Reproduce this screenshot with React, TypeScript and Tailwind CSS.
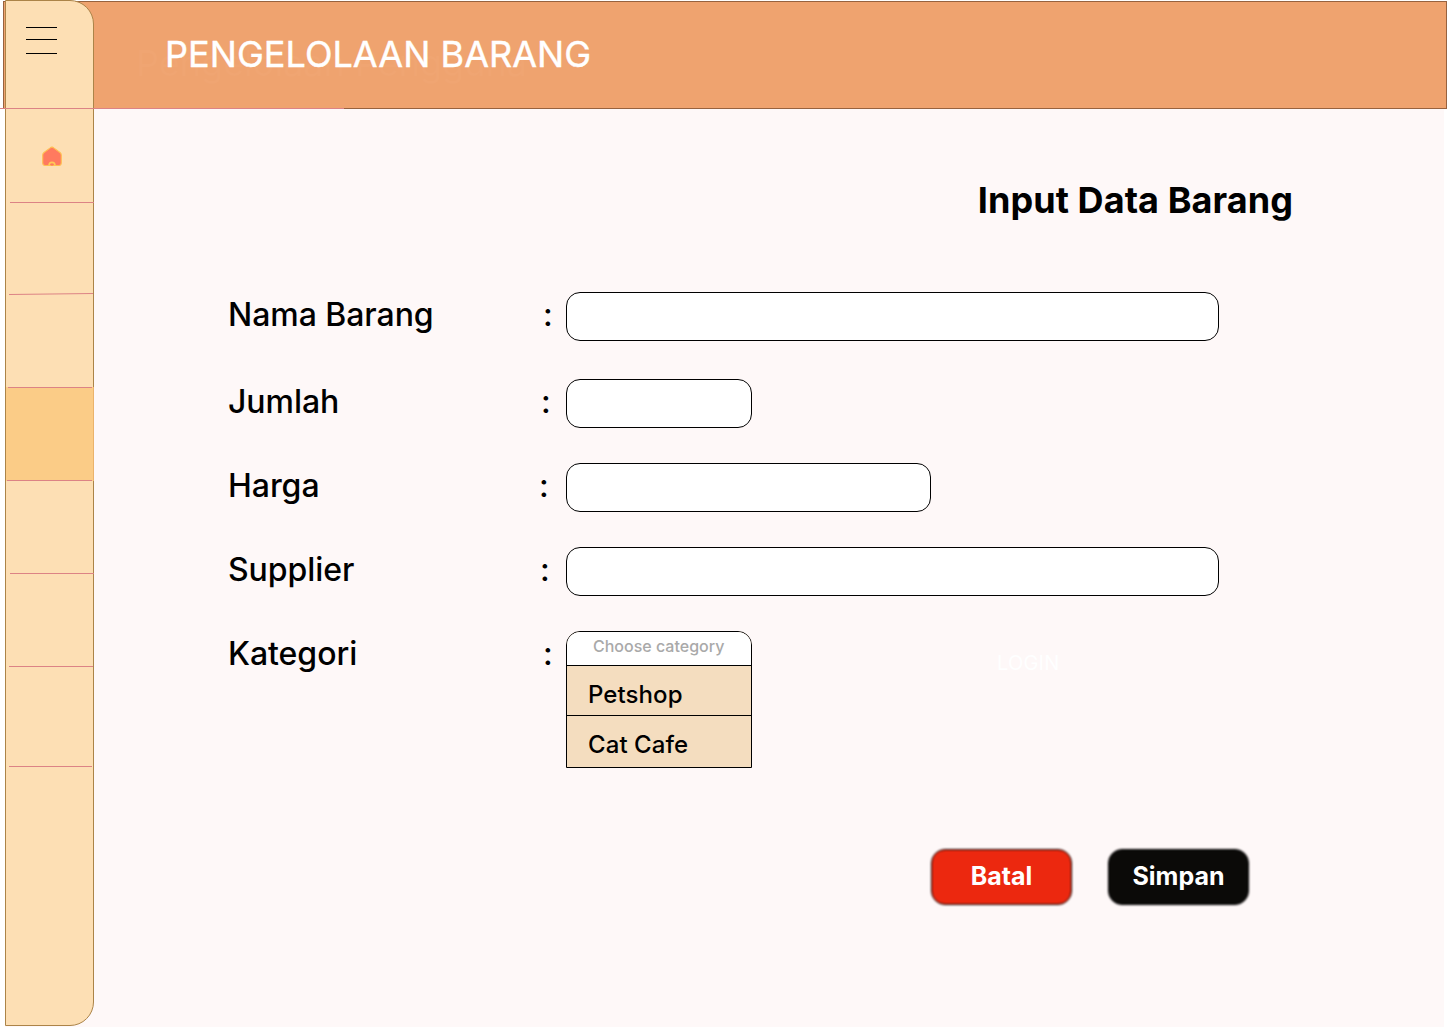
import React from "react";

type Field = { label: string; width: string; colon: string; gap: string };

const fields: Field[] = [
  { label: "Nama Barang", width: "w-[653px]", colon: "w-[23px]", gap: "mb-[38px]" },
  { label: "Jumlah", width: "w-[186px]", colon: "w-[25px]", gap: "mb-[35px]" },
  { label: "Harga", width: "w-[365px]", colon: "w-[27px]", gap: "mb-[35px]" },
  { label: "Supplier", width: "w-[653px]", colon: "w-[26px]", gap: "mb-[35px]" },
];

const label = "text-[32px] leading-[46px] font-medium whitespace-nowrap tracking-[-0.05px]";

function HomeIcon() {
  return (
    <svg className="ml-[34px] mt-[36px]" width="24" height="24" viewBox="0 0 22 22" fill="none">
      <path
        d="M9.400 2.700a2.400 2.400 0 0 1 3.200 0l5.700 4.200c.8.6 1.200 1.400 1.200 2.300v7.300c0 1.500-.9 2.300-2.300 2.300H4.800c-1.400 0-2.300-.8-2.300-2.300V9.200c0-.9.4-1.700 1.200-2.300z"
        fill="#FF7A5F"
        stroke="#FFBE50"
      />
      <path d="M8.300 18.800c0-1.800 1.200-2.900 2.700-2.900s2.700 1.100 2.700 2.900" stroke="#FFC957" strokeWidth="1.500" />
      <path d="M10 18.800c0-1.400 2-1.400 2 0" fill="#FF7A5F" />
    </svg>
  );
}

function Line({ className }: { className: string }) {
  return <div className={`h-px shrink-0 bg-[#DC8385] ${className}`} />;
}

function Sidebar() {
  return (
    <aside className="z-10 col-start-1 row-start-1 row-span-2 ml-[5px] mb-px flex flex-col rounded-r-[24px] border border-[#AC8448] bg-[#FDDFB4]">
      <div className="h-[108px] shrink-0 pl-5 pt-[26px]">
        <div className="h-px w-[31px] bg-black" />
        <div className="mt-[11px] h-px w-[31px] bg-black" />
        <div className="mt-[13px] h-px w-[31px] bg-black" />
      </div>
      <div className="h-[93px] shrink-0">
        <HomeIcon />
      </div>
      <Line className="ml-1 -mr-px" />
      <div className="h-[90px] shrink-0" />
      <svg className="ml-[3px] h-[2px] w-[84px] shrink-0" viewBox="0 0 84 2">
        <path d="M0 1.500L84 0.500" stroke="#DC8385" />
      </svg>
      <div className="h-[92px] shrink-0" />
      <div className="-mr-px flex h-[94px] shrink-0 flex-col justify-between border-r border-[#EBB36B] bg-[#FBCC87]">
        <Line className="ml-[2px] mr-px" />
        <Line className="ml-px mr-px" />
      </div>
      <div className="h-[92px] shrink-0" />
      <Line className="ml-1 -mr-px" />
      <div className="h-[92px] shrink-0" />
      <Line className="ml-[3px]" />
      <div className="h-[99px] shrink-0" />
      <Line className="ml-[3px] mr-px" />
    </aside>
  );
}

function ActionButton({ text, fill }: { text: string; fill: string }) {
  return (
    <button className="relative h-[56px] w-[141px] text-[25px] font-bold text-white">
      <span className={`absolute inset-0 rounded-[14px] border border-black blur-[1px] ${fill}`} />
      <span className="relative -mt-[2px] block leading-[54px]">{text}</span>
    </button>
  );
}

export default function App() {
  return (
    <div className="grid h-[1027px] w-[1447px] grid-cols-[94px_1fr] grid-rows-[109px_918px] overflow-hidden bg-white font-['Inter',sans-serif] text-black">
      <div className="col-span-2 col-start-1 row-start-2 ml-[5px] mr-[3px] bg-[#FEF8F8]" />
      <header className="col-span-2 col-start-1 row-start-1 ml-[3px] mt-px border border-[#97623F] bg-[#EFA36F]">
        <div className="grid">
          <div className="col-start-1 row-start-1 ml-[132px] mt-[39px] text-[36px] leading-[44px] text-[#F0A572]">
            Pengelolaan Pengguna
          </div>
          <h1 className="z-10 col-start-1 row-start-1 ml-[161px] mt-[30px] text-[36px] leading-[44px] tracking-[0.05px] text-white [-webkit-text-stroke:0.4px_white]">
            PENGELOLAAN BARANG
          </h1>
        </div>
      </header>
      <Sidebar />
      <Line className="z-20 col-span-2 col-start-1 row-start-1 w-[344px] self-end" />
      <main className="col-start-2 row-start-2 flex flex-col pl-[134px]">
        <h2 className="mt-[69px] mr-[154px] self-end text-[36px] leading-[44px] font-bold tracking-[0.07px]">
          Input Data Barang
        </h2>
        <form className="mt-[70px] flex flex-col">
          {fields.map((f) => (
            <div key={f.label} className={`flex h-[49px] ${f.gap}`}>
              <label className={`flex-none w-[338px] flex justify-between ${label}`}>
                <span>{f.label}</span>
                <span className={f.colon}>:</span>
              </label>
              <input className={`h-[49px] rounded-[14px] border border-black bg-white ${f.width}`} />
            </div>
          ))}
          <div className="flex">
            <div className={`flex w-[338px] justify-between ${label}`}>
              <span>Kategori</span>
              <span className="w-[23px]">:</span>
            </div>
            <div className="h-[137px] w-[186px] overflow-hidden rounded-t-[14px] border border-black bg-[#F4DDBF] font-medium">
              <div className="h-[34px] border-b border-black bg-white pl-[26px] text-[16px] leading-[29px] text-[#A9A9A9]">
                Choose category
              </div>
              <div className="h-[50px] border-b border-black pl-[21px] text-[24px] leading-[57px] tracking-[0.08px]">
                Petshop
              </div>
              <div className="pl-[21px] text-[24px] leading-[57px] tracking-[0.08px]">Cat Cafe</div>
            </div>
            <div className="ml-[245px] mt-[20px] text-[20px] leading-[24px] tracking-[0.2px] text-white">LOGIN</div>
          </div>
        </form>
        <div className="mt-[81px] flex gap-[36px] pl-[703px]">
          <ActionButton text="Batal" fill="bg-[#EC280F]" />
          <ActionButton text="Simpan" fill="bg-[#0B0A08]" />
        </div>
      </main>
    </div>
  );
}
